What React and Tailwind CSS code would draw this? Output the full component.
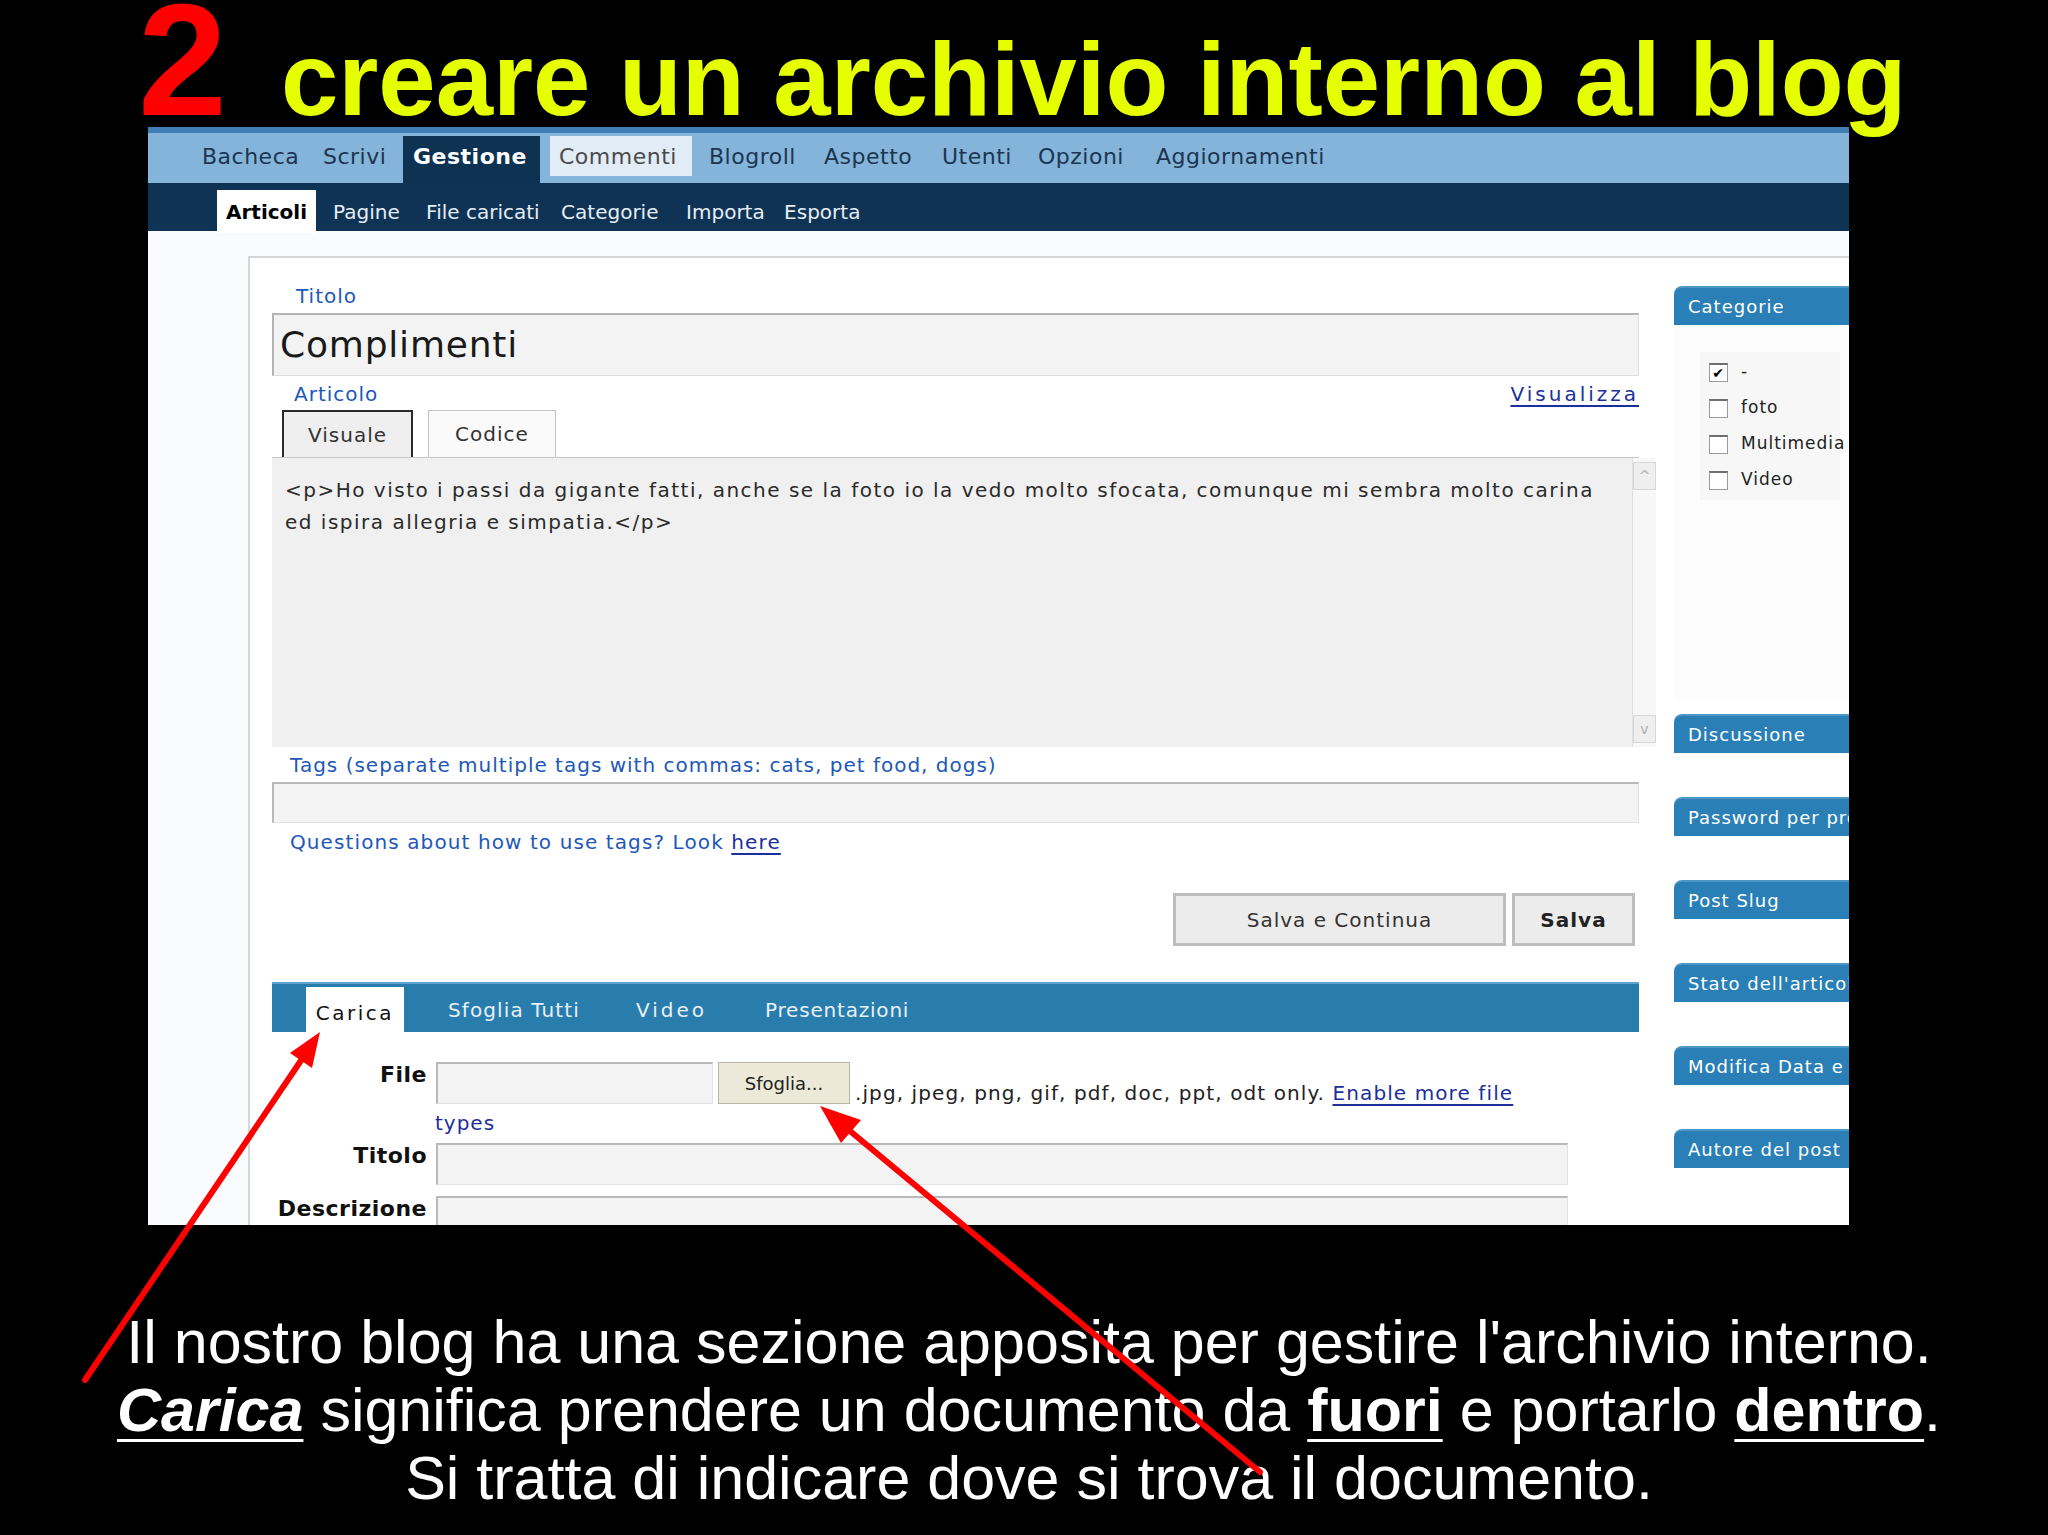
import React from 'react';

const UI = "font-['DejaVu_Sans',Verdana,sans-serif]";

const topNav = [
  { label: 'Bacheca', w: 'w-[121px]' },
  { label: 'Scrivi', w: 'w-[80px]' },
  { label: 'Gestione', w: 'w-[137px]', active: true },
  { label: 'Commenti', w: 'w-[142px]', hover: true },
  { label: 'Blogroll', w: 'w-[115px]' },
  { label: 'Aspetto', w: 'w-[118px]' },
  { label: 'Utenti', w: 'w-[96px]' },
  { label: 'Opzioni', w: 'w-[118px]' },
  { label: 'Aggiornamenti', w: 'w-[200px]' },
];
const subNav = [
  { label: 'Pagine', w: 'w-[93px]' },
  { label: 'File caricati', w: 'w-[135px]' },
  { label: 'Categorie', w: 'w-[125px]' },
  { label: 'Importa', w: 'w-[98px]' },
  { label: 'Esporta', w: 'w-[100px]' },
];
const boxes = ['Discussione', 'Password per proteggere', 'Post Slug', "Stato dell'articolo", 'Modifica Data e ora', 'Autore del post'];
const cats = [
  { label: '-', checked: true },
  { label: 'foto', checked: false },
  { label: 'Multimedia', checked: false },
  { label: 'Video', checked: false },
];

function TopNav() {
  return (
    <div className="h-[56px] border-t-[6px] border-[#3f7fb5] bg-[#84b4d9] flex items-start pt-[3px] pl-[54px] text-[22px] tracking-[0.5px]">
      {topNav.map((item) => {
        if (item.active) {
          return (
            <div key={item.label} className={`${item.w} shrink-0 h-[47px] px-[10px] bg-[#0e3252] text-white font-bold flex items-center pb-[6px]`}>
              {item.label}
            </div>
          );
        }
        if (item.hover) {
          return (
            <div key={item.label} className={`${item.w} shrink-0 h-[40px] px-[9px] bg-[#e2ecf6] text-[#4a4a4a] flex items-center ml-[10px] mr-[17px]`}>
              {item.label}
            </div>
          );
        }
        return (
          <div key={item.label} className={`${item.w} shrink-0 h-[40px] text-[#1c3550] flex items-center`}>
            {item.label}
          </div>
        );
      })}
    </div>
  );
}

function SubNav() {
  return (
    <div className="h-[48px] bg-[#0f3354] flex items-start pl-[69px] text-[20px]">
      <div className="mt-[7px] h-[43px] px-[9px] bg-white text-black font-bold flex items-center mr-[17px]">Articoli</div>
      {subNav.map((item) => (
        <div key={item.label} className={`${item.w} shrink-0 mt-[7px] h-[43px] text-[#e6edf4] flex items-center whitespace-nowrap`}>
          {item.label}
        </div>
      ))}
    </div>
  );
}

function Input({ className = '' }) {
  return <div className={`bg-[#f3f3f3] border-t-2 border-l-2 border-[#b9b9b9] border-r border-b border-r-[#e2e2e2] border-b-[#e2e2e2] ${className}`} />;
}

function MainColumn() {
  return (
    <div className="w-[1367px] shrink-0 flex flex-col">
      <div className="mt-[27px] h-[22px] leading-[22px] text-[20px] tracking-[1px] text-[#2158b8] pl-[24px]">Titolo</div>
      <div className="mt-[6px] h-[63px] bg-[#f3f3f3] border-t-2 border-l-2 border-[#b5b5b5] border-r border-b border-r-[#dedede] border-b-[#dedede] flex items-center pl-[6px] text-[36px] tracking-[0.8px] text-[#1a1a1a]">
        Complimenti
      </div>
      <div className="mt-[7px] h-[22px] leading-[22px] text-[20px] flex justify-between">
        <span className="text-[#2158b8] pl-[22px] tracking-[1px]">Articolo</span>
        <span className="text-[#1c2f9a] underline decoration-2 underline-offset-[4px] tracking-[3px]">Visualizza</span>
      </div>
      <div className="mt-[5px] h-[47px] flex items-stretch gap-[15px] pl-[10px]">
        <div className="w-[131px] bg-[#efefef] border-2 border-[#2a2a2a] border-b-0 flex items-center justify-center text-[20px] tracking-[1px] text-[#333]">Visuale</div>
        <div className="w-[128px] bg-[#fafafa] border border-[#c4c4c4] border-b-0 flex items-center justify-center text-[20px] tracking-[1px] text-[#333]">Codice</div>
      </div>
      <div className="h-[290px] border-t border-[#c8c8c8] flex">
        <div className="flex-1 bg-[#f0f0f0] pt-[16px] pl-[13px] text-[20px] leading-[32px] text-[#2a2a2a] tracking-[1.5px] whitespace-nowrap overflow-hidden">
          {'<p>Ho visto i passi da gigante fatti, anche se la foto io la vedo molto sfocata, comunque mi sembra molto carina'}
          <br />
          {'ed ispira allegria e simpatia.</p>'}
        </div>
        <div className="w-[24px] bg-[#f7f7f7] border-l border-[#e0e0e0] flex flex-col justify-between py-[4px] -mr-[17px]">
          <div className="h-[28px] border border-[#d8d8d8] bg-[#efefef] text-[#b0b0b0] text-[14px] flex items-center justify-center">^</div>
          <div className="h-[28px] border border-[#d8d8d8] bg-[#efefef] text-[#b0b0b0] text-[14px] flex items-center justify-center">v</div>
        </div>
      </div>
      <div className="mt-[7px] h-[22px] leading-[22px] text-[20px] text-[#2158b8] pl-[18px] tracking-[1px] whitespace-nowrap">
        Tags (separate multiple tags with commas: cats, pet food, dogs)
      </div>
      <Input className="mt-[6px] h-[41px]" />
      <div className="mt-[8px] h-[22px] leading-[22px] text-[20px] text-[#2158b8] pl-[18px] tracking-[1.1px] whitespace-nowrap">
        Questions about how to use tags? Look <span className="text-[#1c2f9a] underline decoration-2 underline-offset-[4px]">here</span>
      </div>
      <div className="mt-[40px] h-[53px] flex justify-end gap-[6px] pr-[4px]">
        <div className="w-[333px] bg-[#ececec] border-[3px] border-[#bdbdbd] flex items-center justify-center text-[20px] text-[#333] tracking-[1px]">Salva e Continua</div>
        <div className="w-[123px] bg-[#ececec] border-[3px] border-[#bdbdbd] flex items-center justify-center text-[20px] font-bold text-[#222] tracking-[1px]">Salva</div>
      </div>
      <div className="mt-[36px] h-[50px] bg-[#287dac] border-t-2 border-[#5ea3cf] flex items-start pl-[34px] text-[20px] text-[#e8f0f6]">
        <div className="mt-[3px] w-[98px] h-[51px] bg-white text-[#111] flex items-end justify-center pb-[10px] tracking-[2.5px]">Carica</div>
        <div className="ml-[44px] w-[188px] h-[48px] flex items-end pb-[7px] tracking-[1.1px]">Sfoglia Tutti</div>
        <div className="w-[129px] h-[48px] flex items-end pb-[7px] tracking-[3px]">Video</div>
        <div className="h-[48px] flex items-end pb-[7px] tracking-[0.8px]">Presentazioni</div>
      </div>
      <div className="mt-[30px] h-[42px] flex items-start">
        <div className="w-[155px] text-right font-bold text-[22px] text-[#111] leading-[26px] tracking-[0.5px]">File</div>
        <Input className="ml-[9px] w-[277px] h-[42px]" />
        <div className="ml-[5px] w-[132px] h-[42px] bg-[#ece9d8] border border-[#b8b5a6] flex items-center justify-center text-[18px] text-[#222]">Sfoglia...</div>
        <div className="ml-[5px] self-end text-[20px] text-[#222] leading-[22px] whitespace-nowrap tracking-[1.1px]">
          .jpg, jpeg, png, gif, pdf, doc, ppt, odt only. <span className="text-[#1c2f9a] underline decoration-2 underline-offset-[4px]">Enable more file</span>
        </div>
      </div>
      <div className="mt-[8px] h-[22px] leading-[22px] text-[20px] text-[#1c2f9a] pl-[163px] tracking-[1px]">types</div>
      <div className="mt-[9px] h-[42px] flex items-start">
        <div className="w-[155px] text-right font-bold text-[22px] text-[#111] leading-[26px] tracking-[0.5px]">Titolo</div>
        <Input className="ml-[9px] w-[1132px] h-[42px]" />
      </div>
      <div className="mt-[11px] h-[42px] flex items-start">
        <div className="w-[155px] text-right font-bold text-[22px] text-[#111] leading-[26px] tracking-[0.5px] whitespace-nowrap">Descrizione</div>
        <Input className="ml-[9px] w-[1132px] h-[42px]" />
      </div>
    </div>
  );
}

function SideHeader({ children, className = '' }) {
  return (
    <div className={`h-[39px] rounded-tl-[8px] bg-[#2a80b6] border-t-2 border-[#4c97c6] flex items-center pl-[14px] text-[18px] text-white whitespace-nowrap tracking-[1px] ${className}`}>
      {children}
    </div>
  );
}

function Sidebar() {
  return (
    <div className="ml-[35px] w-[200px] shrink-0 flex flex-col">
      <SideHeader className="mt-[28px]">Categorie</SideHeader>
      <div className="h-[375px] bg-[#fdfdfd]">
        <div className="mt-[27px] ml-[26px] w-[140px] bg-[#f7f7f7] py-[2px]">
          {cats.map((c) => (
            <div key={c.label} className="h-[36px] flex items-center pl-[9px] gap-[13px] text-[17px] text-[#222] tracking-[1px] whitespace-nowrap">
              <div className="w-[19px] h-[19px] shrink-0 bg-white border border-[#9a9a9a] border-t-2 border-t-[#6e6e6e] flex items-center justify-center text-[14px] leading-none text-black">
                {c.checked ? '✔' : ''}
              </div>
              {c.label}
            </div>
          ))}
        </div>
      </div>
      <div className="mt-[14px] flex flex-col gap-[44px]">
        {boxes.map((b) => (
          <SideHeader key={b}>{b}</SideHeader>
        ))}
      </div>
    </div>
  );
}

function Screenshot() {
  return (
    <div className={`ml-[148px] w-[1701px] h-[1098px] overflow-hidden bg-[#f9fbfd] flex flex-col ${UI}`}>
      <TopNav />
      <SubNav />
      <div className="flex-1 flex">
        <div className="w-[100px] shrink-0" />
        <div className="flex-1 mt-[25px] bg-white border-t-2 border-l-2 border-[#d6d6d6] flex pl-[22px]">
          <MainColumn />
          <Sidebar />
        </div>
      </div>
    </div>
  );
}

function Arrows() {
  return (
    <svg className="absolute inset-0 pointer-events-none" width="2048" height="1535" viewBox="0 0 2048 1535">
      <line x1="85" y1="1380" x2="302" y2="1059" stroke="#ff0000" strokeWidth="6" strokeLinecap="round" />
      <polygon points="320,1032 312,1068 290,1053" fill="#ff0000" />
      <line x1="1260" y1="1472" x2="850" y2="1131" stroke="#ff0000" strokeWidth="6" strokeLinecap="round" />
      <polygon points="820,1106 861,1120 841,1143" fill="#ff0000" />
    </svg>
  );
}

export default function App() {
  return (
    <div className="relative w-[2048px] h-[1535px] bg-black overflow-hidden font-['Liberation_Sans',Arial,sans-serif]">
      <div className="h-[127px] flex items-baseline pl-[138px] whitespace-nowrap">
        <span className="text-[160px] leading-[119px] font-bold text-[#ff0000]">2</span>
        <span className="ml-[54px] text-[103px] leading-[126px] font-bold text-[#e6ff00]">creare un archivio interno al blog</span>
      </div>
      <Screenshot />
      <div className="mt-[83px] text-center text-white text-[61px] leading-[68px] pl-[10px]">
        <div>Il nostro blog ha una sezione apposita per gestire l'archivio interno.</div>
        <div>
          <span className="font-bold italic underline decoration-[3px] underline-offset-[8px]">Carica</span> significa prendere un documento da{' '}
          <span className="font-bold underline decoration-[3px] underline-offset-[8px]">fuori</span> e portarlo{' '}
          <span className="font-bold underline decoration-[3px] underline-offset-[8px]">dentro</span>.
        </div>
        <div>Si tratta di indicare dove si trova il documento.</div>
      </div>
      <Arrows />
    </div>
  );
}
